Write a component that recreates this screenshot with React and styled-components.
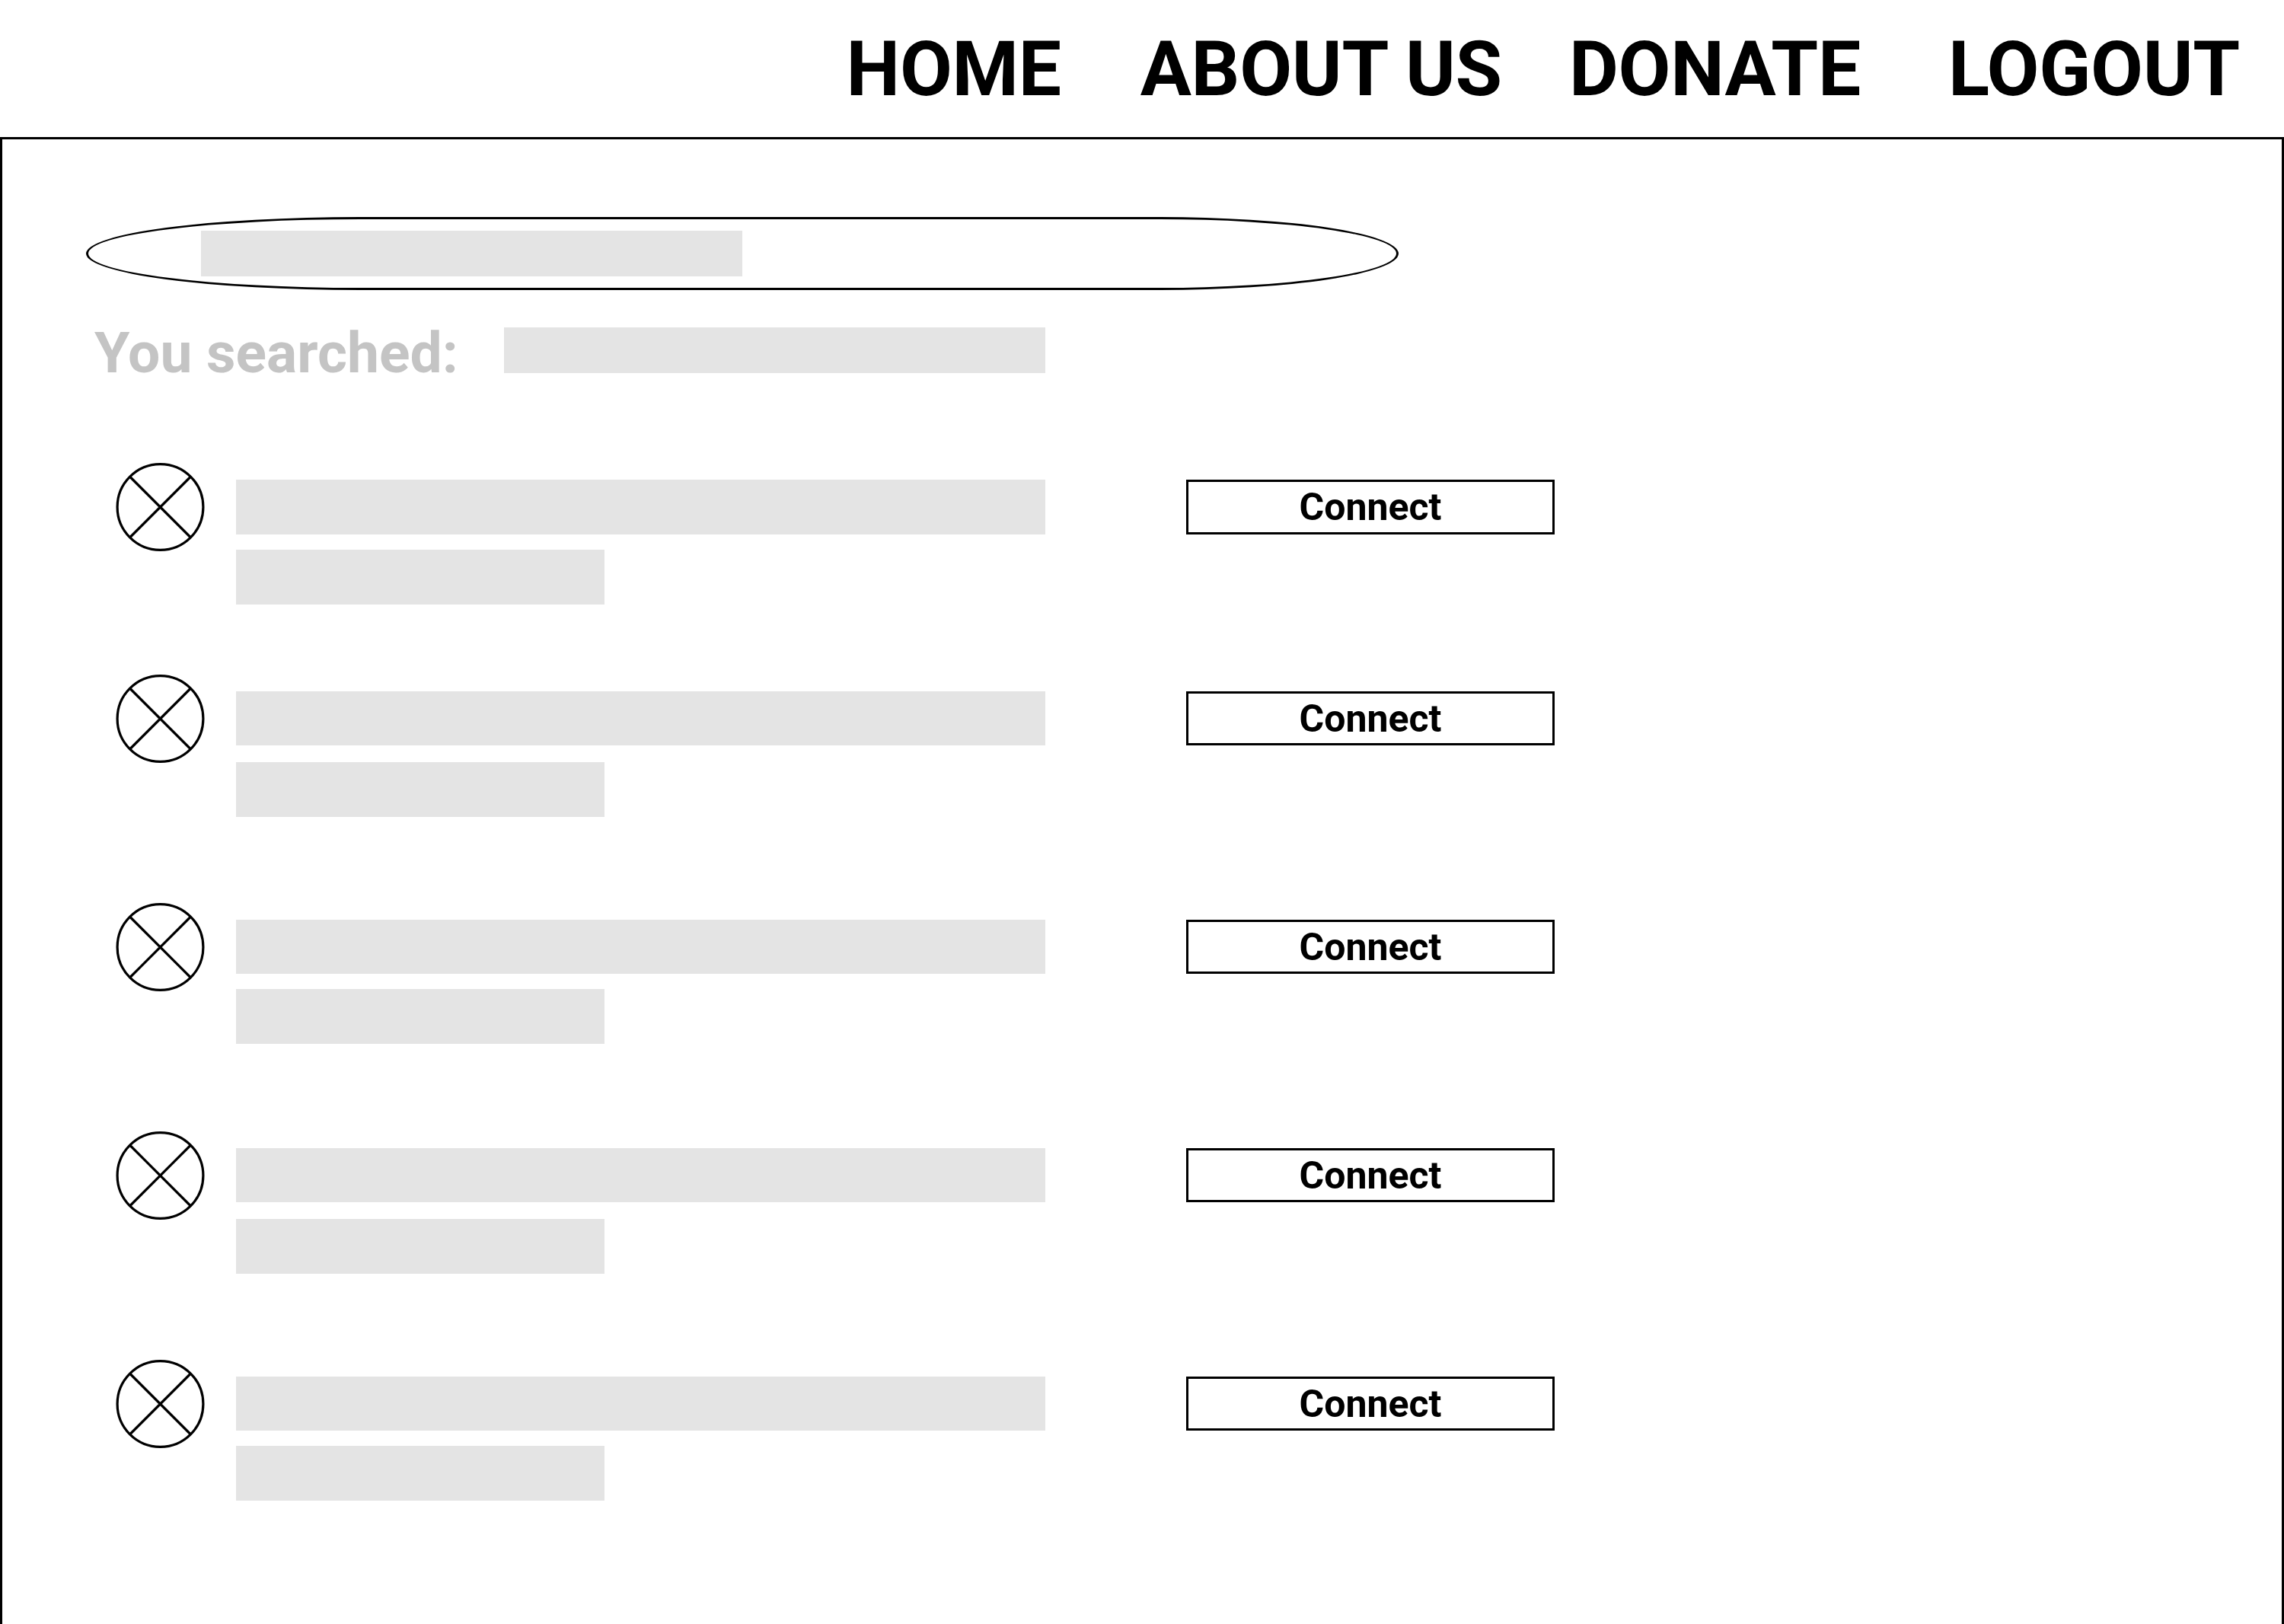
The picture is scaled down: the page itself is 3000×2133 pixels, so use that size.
import React from 'react';
import styled, { createGlobalStyle } from 'styled-components';

const GlobalStyle = createGlobalStyle`
  html, body {
    margin: 0;
    padding: 0;
    background: #fff;
    font-family: Roboto, "Liberation Sans", sans-serif;
  }
`;

// nav
const Nav = styled.nav`
  display: flex;
  justify-content: flex-end;
  box-sizing: border-box;
  height: 180px;
  padding: 32px 58px 0 0;
`;

const NavLink = styled.a`
  margin-left: ${(p) => p.$gap}px;
  font-size: 100px;
  line-height: 117px;
  font-weight: 700;
  letter-spacing: -0.3px;
  color: #000;
  white-space: nowrap;
`;

// panel
const Panel = styled.main`
  box-sizing: border-box;
  height: 1953px;
  padding: 102px 0 0 110px;
  border-top: 3px solid #000;
  border-left: 3px solid #000;
  border-right: 3px solid #000;
`;

const SearchPill = styled.div`
  box-sizing: border-box;
  width: 1724px;
  height: 96px;
  padding: 15px 0 0 148px;
  border: 3px solid #000;
  border-radius: 360px 315px 315px 360px / 48px;
`;

const Placeholder = styled.div`
  width: ${(p) => p.$w}px;
  height: ${(p) => p.$h}px;
  background: #e4e4e4;
`;

const SearchedRow = styled.div`
  display: flex;
  align-items: flex-start;
  margin: 49px 0 111px 11px;
`;

const SearchedLabel = styled.div`
  width: 538px;
  font-size: 75px;
  line-height: 67px;
  font-weight: 700;
  color: #c4c4c4;
  white-space: nowrap;
`;

const ResultList = styled.div`
  display: flex;
  flex-direction: column;
  margin-left: 39px;
`;

const Result = styled.div`
  display: flex;
  align-items: flex-start;
  margin-bottom: ${(p) => p.$after}px;
`;

const Avatar = styled.svg`
  display: block;
  flex: none;
  width: 117px;
  height: 116px;
`;

const ResultText = styled.div`
  display: flex;
  flex-direction: column;
  gap: ${(p) => p.$gap}px;
  width: 1063px;
  margin: 22px 0 0 41px;
`;

const ConnectButton = styled.button`
  box-sizing: border-box;
  width: 484px;
  height: ${(p) => p.$h}px;
  margin: 22px 0 0 185px;
  padding: 0;
  background: #fff;
  border: 3px solid #000;
  font-family: Roboto, "Liberation Sans", sans-serif;
  font-size: 50px;
  font-weight: 700;
  color: #000;
`;

const links = [
  { label: 'HOME', gap: 0 },
  { label: 'ABOUT US', gap: 104 },
  { label: 'DONATE', gap: 88 },
  { label: 'LOGOUT', gap: 115 },
];

const results = [
  { h: 72, gap: 20, after: 92 },
  { h: 71, gap: 22, after: 113 },
  { h: 71, gap: 20, after: 115 },
  { h: 71, gap: 22, after: 113 },
  { h: 71, gap: 20, after: 0 },
];

const PlaceholderIcon = () => (
  <Avatar viewBox="0 0 117 116" fill="none" stroke="#000" strokeWidth="3.2">
    <circle cx="58.5" cy="58" r="56.4" />
    <path d="M18.5 18 L98.5 98 M98.5 18 L18.5 98" />
  </Avatar>
);

const App = () => (
  <>
    <GlobalStyle />
    <Nav>
      {links.map((l) => (
        <NavLink key={l.label} $gap={l.gap}>{l.label}</NavLink>
      ))}
    </Nav>
    <Panel>
      <SearchPill>
        <Placeholder $w={711} $h={60} />
      </SearchPill>
      <SearchedRow>
        <SearchedLabel>You searched:</SearchedLabel>
        <Placeholder $w={711} $h={60} />
      </SearchedRow>
      <ResultList>
        {results.map((r, i) => (
          <Result key={i} $after={r.after}>
            <PlaceholderIcon />
            <ResultText $gap={r.gap}>
              <Placeholder $w={1063} $h={r.h} />
              <Placeholder $w={484} $h={72} />
            </ResultText>
            <ConnectButton $h={r.h}>Connect</ConnectButton>
          </Result>
        ))}
      </ResultList>
    </Panel>
  </>
);

export default App;
